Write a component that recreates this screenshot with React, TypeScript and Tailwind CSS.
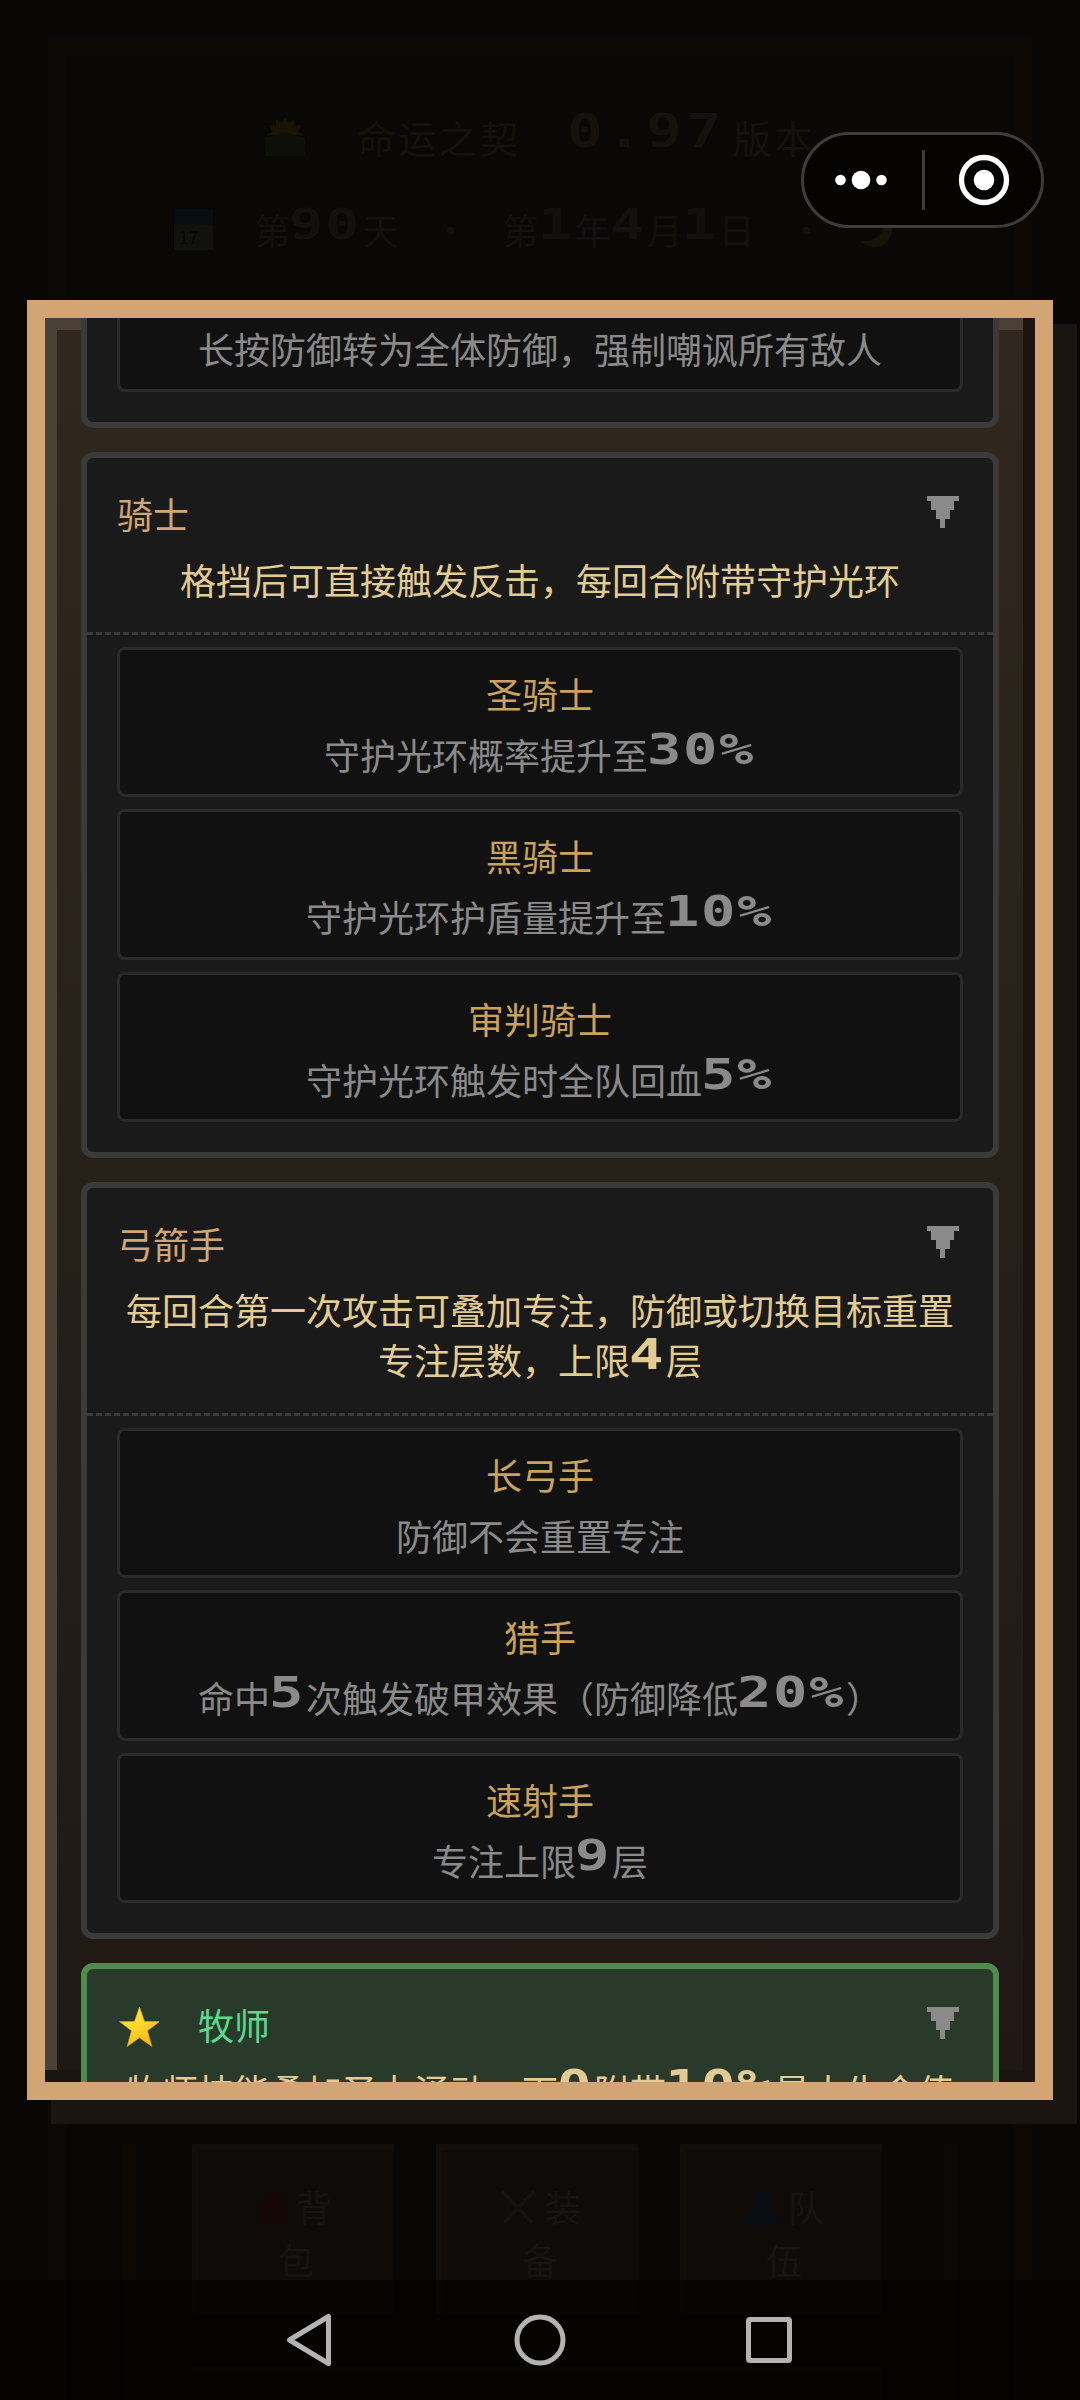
type Skill = { name?: string; desc: string };

type Job = {
  name: string;
  desc: string;
  skills: Skill[];
  current?: boolean;
};

const JOBS: Job[] = [
  {
    name: "骑士",
    desc: "格挡后可直接触发反击，每回合附带守护光环",
    skills: [
      { name: "圣骑士", desc: "守护光环概率提升至30%" },
      { name: "黑骑士", desc: "守护光环护盾量提升至10%" },
      { name: "审判骑士", desc: "守护光环触发时全队回血5%" },
    ],
  },
  {
    name: "弓箭手",
    desc: "每回合第一次攻击可叠加专注，防御或切换目标重置专注层数，上限4层",
    skills: [
      { name: "长弓手", desc: "防御不会重置专注" },
      { name: "猎手", desc: "命中5次触发破甲效果（防御降低20%）" },
      { name: "速射手", desc: "专注上限9层" },
    ],
  },
  {
    name: "牧师",
    desc: "牧师技能叠加圣力涌动，下0附带10%最大生命值",
    skills: [],
    current: true,
  },
];

// digits and percent signs are drawn in wide full-width cells
function GameText({ text }: { text: string }) {
  return (
    <>
      {text.split(/([0-9.%]+)/).map((part, i) =>
        /^[0-9.%]+$/.test(part) ? (
          <span
            key={i}
            className="relative -top-[6px] inline-block text-left leading-[0] whitespace-nowrap"
            style={{ width: part.length * 36 }}
          >
            <span className="-ml-px inline-block origin-left scale-x-[1.33] font-['DejaVu_Sans_Mono'] text-[43px] font-bold tracking-[1.15px]">
              {part}
            </span>
          </span>
        ) : (
          <span key={i}>{part}</span>
        ),
      )}
    </>
  );
}

function Arrow() {
  return (
    <svg viewBox="0 0 32 32" className="mt-2 mr-1 size-8" shapeRendering="crispEdges">
      <path d="M0 0h32v5h-5v9h-4v9h-5v9h-5v-9H9v-9H4V5H0z" fill="#8a8a8a" />
    </svg>
  );
}

function Star() {
  return (
    <svg viewBox="0 0 42 42" className="mt-[7px] mr-[39px] size-[42px]">
      <defs>
        <linearGradient id="star" x1="0" y1="0" x2="0.6" y2="1">
          <stop offset="0" stopColor="#fff04a" />
          <stop offset="0.55" stopColor="#fdd62e" />
          <stop offset="1" stopColor="#f6b41c" />
        </linearGradient>
      </defs>
      <path
        d="M22.500 1l5 14.400 15 .2-12 9.200 4.400 15.700-12.400-8.700-12.400 8.700 4.400-15.700-12-9.200 15-.2z"
        fill="url(#star)"
        stroke="#e0a520"
        strokeWidth="0.6"
      />
    </svg>
  );
}

function SkillBox({ name, desc }: Skill) {
  return (
    <div className="rounded-lg border-[3px] border-[#2a2a2a] bg-[#111111] py-[18px] text-center">
      <p className="h-[60px] leading-[51px] text-[#c9a35c]">{name}</p>
      <p className="h-[48.5px] leading-[52px] text-[#8a8a8a]">
        <GameText text={desc} />
      </p>
    </div>
  );
}

function JobCard({ job }: { job: Job }) {
  return (
    <div
      className={
        job.current
          ? "rounded-xl border-[6px] border-[#4f8a4f] bg-[#2a3a2a]"
          : "rounded-xl border-[6px] border-[#3a3a3a] bg-[#1a1a1a]"
      }
    >
      <div className="border-b-[3px] border-dashed border-[#3a3a3a] px-[30px] pt-[30px] pb-7">
        <div className="flex h-[50px] justify-between">
          <div className="flex">
            {job.current && <Star />}
            <h3 className={job.current ? "leading-[50px] text-[#5bd98c]" : "leading-[51px] text-[#d4a574]"}>
              {job.name}
            </h3>
          </div>
          <Arrow />
        </div>
        <p className="mt-4 text-center leading-[50.2px] text-[#e3cc94]">
          <GameText text={job.desc} />
        </p>
      </div>
      <div className="flex flex-col gap-3 px-[30px] pt-3 pb-[30px]">
        {job.skills.map((skill) => (
          <SkillBox key={skill.desc} {...skill} />
        ))}
      </div>
    </div>
  );
}

function MenuTile({ icon, label }: { icon: React.ReactNode; label: string }) {
  return (
    <div className="flex h-[170px] w-[202px] flex-col items-center border-t-[6px] border-l-[6px] border-[#110e0b] bg-[#0f0b08] pt-[30px] leading-[53px] text-[#171411]">
      <div className="flex items-center gap-2">
        {icon}
        <span>{label[0]}</span>
      </div>
      <span>{label[1]}</span>
    </div>
  );
}

// the main game screen, dimmed behind the dialog
function DimmedGame() {
  return (
    <div className="flex h-full flex-col bg-[#080705] px-[48px] pt-[38px]">
      <div className="h-[262px] shrink-0 border-[18px] border-b-0 border-[#0c0805] bg-[#090806] pt-[55px] text-[#15110d]">
        <div className="flex h-[50px] items-center justify-center text-[38px] tracking-[3px]">
          <svg viewBox="0 0 40 40" className="mr-[52px] size-10">
            <path
              d="M20 1l3 6 6-4v7l7-1-3 7 6 3H1l6-3-3-7 7 1V3l6 4z"
              fill="#1a1205"
            />
            <path d="M0 22l20-6 20 6v18H0z" fill="#0c1008" />
          </svg>
          命运之契
          <span className="relative -top-[5px] mr-[8px] ml-[46px] inline-block w-[158px] font-['DejaVu_Sans_Mono'] text-[46px] font-bold whitespace-nowrap">
            <span className="inline-block origin-left scale-x-[1.29]">0.97</span>
          </span>
          版本
        </div>
        <div className="mt-[43px] flex h-[50px] items-center justify-center pr-2 text-[#12110d]">
          <svg viewBox="0 0 40 42" className="mr-[40px] size-[41px]">
            <path d="M0 0h40v16H0z" fill="#080d14" />
            <path d="M0 16h40v26H0z" fill="#11110f" />
            <text x="5" y="36" fontSize="18" fill="#050504">17</text>
          </svg>
          <span>
            <GameText text="第90天" />
          </span>
          <span className="mx-[34px]">·</span>
          <span>
            <GameText text="第1年4月1日" />
          </span>
          <span className="mx-[34px]">·</span>
          <svg viewBox="0 0 40 40" className="size-10">
            <path d="M26 2c12 14 8 34-8 36-7 1-13-2-16-6 18 2 26-12 24-30z" fill="#151305" />
          </svg>
        </div>
      </div>
      <div className="flex flex-1 border-x-[18px] border-[#0b0805] px-[56px] pt-[1844px]">
        <div className="flex h-full flex-1 flex-wrap content-start gap-x-[42px] gap-y-[53px] border-x-[14px] border-[#0b0805] pl-[56px]">
          <MenuTile
            label="背包"
            icon={
              <svg viewBox="0 0 28 36" className="h-9 w-7">
                <path d="M4 12q10-20 20 0l4 24H0z" fill="#150705" />
              </svg>
            }
          />
          <MenuTile
            label="装备"
            icon={
              <svg viewBox="0 0 38 38" className="size-[38px]">
                <path d="M3 3l30 32M35 3L5 35" stroke="#141311" strokeWidth="4" />
              </svg>
            }
          />
          <MenuTile
            label="队伍"
            icon={
              <svg viewBox="0 0 36 36" className="size-9">
                <circle cx="18" cy="10" r="9" fill="#070d13" />
                <path d="M2 36q0-18 16-18t16 18z" fill="#070d13" />
              </svg>
            }
          />
          <div className="h-[33px] w-[690px] border-t-[6px] border-[#0d0a08] bg-[#0a0806]" />
        </div>
      </div>
    </div>
  );
}

function Capsule() {
  return (
    <div className="absolute top-[132px] left-[801px] flex h-24 w-[243px] items-center rounded-full border-[3px] border-[#3d3d3d] bg-[#040302]">
      <svg viewBox="0 0 118 60" className="h-[60px] w-[118px]" fill="#ffffff">
        <circle cx="36.500" cy="30" r="5.300" />
        <circle cx="57" cy="30" r="9.300" />
        <circle cx="77.500" cy="30" r="5.300" />
      </svg>
      <div className="h-[60px] w-[3px] bg-[#3d3d3d]" />
      <svg viewBox="0 0 114 60" className="h-[60px] w-[114px]">
        <circle cx="59" cy="30" r="22.500" fill="none" stroke="#ffffff" strokeWidth="5.300" />
        <circle cx="59" cy="30" r="10.300" fill="#ffffff" />
      </svg>
    </div>
  );
}

function NavBar() {
  return (
    <div className="absolute inset-x-0 bottom-0 flex h-[120px] items-center justify-center gap-[170px] bg-black/50">
      <svg viewBox="0 0 60 60" className="size-[60px]" fill="none" stroke="#b3b3b3" strokeWidth="5" strokeLinejoin="round">
        <path d="M48.500 6.500v47L9.500 30z" />
      </svg>
      <svg viewBox="0 0 60 60" className="size-[60px]" fill="none" stroke="#b3b3b3" strokeWidth="5">
        <circle cx="30" cy="30" r="23" />
      </svg>
      <svg viewBox="0 0 60 60" className="size-[60px]" fill="none" stroke="#b3b3b3" strokeWidth="5">
        <rect x="8.500" y="9.500" width="41" height="41" rx="1.500" />
      </svg>
    </div>
  );
}

export default function App() {
  return (
    <div className="relative h-[2400px] w-[1080px] overflow-hidden bg-[#080705] font-['Noto_Sans_CJK_SC',sans-serif] text-[36px]">
      <DimmedGame />
      <div className="absolute top-[300px] left-[27px] h-[1800px] w-[1026px] border-[18px] border-[#d4a574] bg-linear-to-b from-[#30281e] to-[#1f1814] shadow-[24px_24px_0_#1a1510,inset_-12px_-12px_0_#1a1510,inset_12px_12px_0_#4a4035]">
        <div className="flex h-full flex-col gap-6 overflow-hidden px-[36px]">
          <div className="-mt-[83px] rounded-xl border-[6px] border-[#3a3a3a] bg-[#1a1a1a] px-[30px] pb-[30px]">
            <SkillBox desc="长按防御转为全体防御，强制嘲讽所有敌人" />
          </div>
          {JOBS.map((job) => (
            <JobCard key={job.name} job={job} />
          ))}
        </div>
      </div>
      <Capsule />
      <NavBar />
    </div>
  );
}
